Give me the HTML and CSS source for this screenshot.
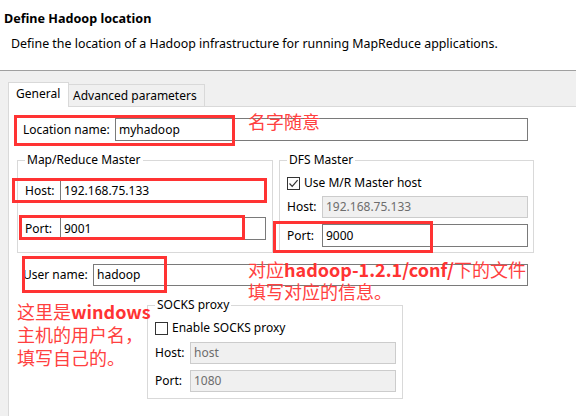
FILE: index.html
```html
<!DOCTYPE html>
<html>
<head>
<meta charset="utf-8">
<link rel="stylesheet" href="styles.css">
</head>
<body>
<div class="header">
  <div class="title">Define Hadoop location</div>
  <div class="desc">Define the location of a Hadoop infrastructure for running MapReduce applications.</div>
</div>
<div class="main">
  <div class="tabs">
    <div class="tab tab-active">General</div>
    <div class="tab tab-other">Advanced parameters</div>
  </div>
  <div class="panel">
    <div class="row row-location">
      <span class="label lbl-location">Location name:</span>
      <div class="input input-location">myhadoop</div>
    </div>
    <div class="groups">
      <fieldset class="group group-mr">
        <legend>Map/Reduce Master</legend>
        <div class="row row-mrhost">
          <span class="label lbl-short">Host:</span>
          <div class="input input-grp">192.168.75.133</div>
        </div>
        <div class="row row-mrport">
          <span class="label lbl-short">Port:</span>
          <div class="input input-grp">9001</div>
        </div>
      </fieldset>
      <fieldset class="group group-dfs">
        <legend>DFS Master</legend>
        <div class="check-row check-dfs">
          <span class="checkbox"><svg width="11" height="11" viewBox="0 0 11 11"><path d="M1.5 5.5 L4.2 8.3 L9.6 2.2" fill="none" stroke="#333" stroke-width="1.2"/></svg></span>
          <span>Use M/R Master host</span>
        </div>
        <div class="row row-dfshost">
          <span class="label lbl-short">Host:</span>
          <div class="input input-grp input-disabled h22">192.168.75.133</div>
        </div>
        <div class="row row-dfsport">
          <span class="label lbl-short">Port:</span>
          <div class="input input-grp">9000</div>
        </div>
      </fieldset>
    </div>
    <div class="row row-user">
      <span class="label lbl-user">User name:</span>
      <div class="input input-user h22">hadoop</div>
    </div>
    <fieldset class="group group-socks">
      <legend>SOCKS proxy</legend>
      <div class="check-row check-socks">
        <span class="checkbox"></span>
        <span>Enable SOCKS proxy</span>
      </div>
      <div class="row row-sockshost">
        <span class="label lbl-short">Host:</span>
        <div class="input input-grp input-disabled h22">host</div>
      </div>
      <div class="row row-socksport">
        <span class="label lbl-short">Port:</span>
        <div class="input input-grp input-disabled h22">1080</div>
      </div>
    </fieldset>
  </div>
</div>

<div class="mark mark-location"></div>
<div class="mark mark-mrhost"></div>
<div class="mark mark-mrport"></div>
<div class="mark mark-dfsport"></div>
<div class="mark mark-user"></div>

<div class="note note-name">名字随意</div>
<div class="note note-conf">对应<b>hadoop-1.2.1/conf/</b>下的文件<br>填写对应的信息。</div>
<div class="note note-user">这里是<b>windows</b><br>主机的用户名，<br>填写自己的。</div>
</body>
</html>
```

FILE: styles.css
```css
* { box-sizing: border-box; }
html, body { margin: 0; padding: 0; }
body {
  width: 576px;
  height: 416px;
  overflow: hidden;
  position: relative;
  background: #fff;
  font-family: "Noto Sans", "Noto Sans CJK SC", sans-serif;
  font-size: 12px;
  color: #000;
  line-height: 16px;
}
.header {
  height: 71px;
  border-bottom: 1px solid #a0a0a0;
  background: #fff;
}
.title {
  padding: 11px 0 0 4px;
  font-weight: bold;
  font-size: 12.6px;
}
.desc {
  padding: 9px 0 0 11px;
  font-size: 12.4px;
}
.main {
  background: #f0f0f0;
  height: 345px;
  padding: 11px 0 0 8px;
}
.tabs {
  display: flex;
  align-items: flex-start;
  height: 24px;
}
.tab {
  border: 1px solid #d9d9d9;
  border-bottom: none;
}
.tab-active {
  position: relative;
  z-index: 2;
  width: 61px;
  height: 25px;
  background: #fff;
  padding-left: 7px;
  line-height: 22px;
}
.tab-other {
  margin-top: 2px;
  width: 136px;
  height: 22px;
  border-left: none;
  background: #f0f0f0;
  padding: 1px 0 0 4px;
  line-height: 20px;
}
.panel {
  background: #fff;
  border: 1px solid #d9d9d9;
  border-right: none;
  height: 330px;
}
.row {
  display: flex;
  align-items: center;
}
.label { flex: none; }
.input {
  flex: none;
  height: 23px;
  border: 1px solid #7a7a7a;
  padding: 0 3px;
  line-height: 21px;
  background: #fff;
  white-space: nowrap;
  overflow: hidden;
}
.h22 { height: 22px; line-height: 20px; }
.input-disabled {
  background: #f0f0f0;
  border-color: #cccccc;
  color: #6d6d6d;
}
.row-location { margin: 11px 0 0 14px; }
.lbl-location { width: 92px; }
.input-location { width: 413px; }

.groups {
  display: flex;
  gap: 6px;
  margin: 11px 0 0 8px;
}
.group {
  margin: 0;
  border: 1px solid #d9d9d9;
  padding: 0 6px 0 7px;
  min-width: 0;
}
.group legend {
  padding: 0 2px;
  line-height: 16px;
}
.group-mr { width: 256px; height: 101px; }
.group-dfs { width: 255px; height: 101px; }
.lbl-short { width: 35px; }
.input-grp { width: 206px; }
.row-mrhost { margin-top: 11px; }
.row-mrport { margin-top: 15px; }

.check-row {
  display: flex;
  align-items: center;
  gap: 4px;
}
.checkbox {
  width: 13px;
  height: 13px;
  border: 1px solid #333;
  background: #fff;
  display: flex;
  align-items: center;
  justify-content: center;
  flex: none;
}
.check-dfs { margin-top: 7px; }
.row-dfshost { margin-top: 5px; }
.row-dfsport { margin-top: 6px; }

.row-user { margin: 11px 0 0 14px; }
.lbl-user { width: 70px; }
.input-user { width: 435px; }

.group-socks {
  margin: 11px 0 0 138px;
  width: 256px;
  height: 102px;
}
.check-socks { margin-top: 7px; }
.row-sockshost { margin-top: 6px; }
.row-socksport { margin-top: 6px; }

.mark {
  position: absolute;
  border: 3px solid #ff3333;
}
.mark-location { left: 14px; top: 115px; width: 221px; height: 31px; }
.mark-mrhost { left: 12px; top: 178px; width: 255px; height: 25px; }
.mark-mrport { left: 19px; top: 215px; width: 226px; height: 25px; }
.mark-dfsport { left: 273px; top: 221px; width: 160px; height: 32px; }
.mark-user { left: 22px; top: 256px; width: 145px; height: 37px; }

.note {
  position: absolute;
  color: #ff4040;
  font-family: "Noto Sans CJK SC", sans-serif;
  font-size: 18px;
  white-space: nowrap;
}
.note b { font-weight: bold; color: #ff3333; }
.note-name { left: 248px; top: 109px; line-height: 24px; }
.note-conf { left: 248px; top: 258px; line-height: 22px; }
.note-user { left: 17px; top: 300px; line-height: 23px; }
```
